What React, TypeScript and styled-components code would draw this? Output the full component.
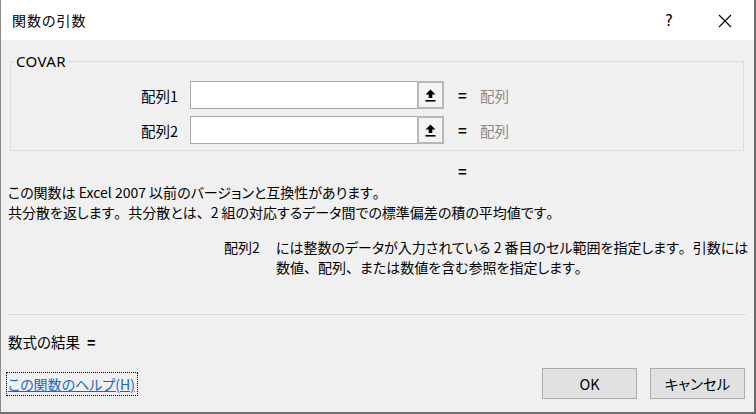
import { FC } from 'react';
import styled, { createGlobalStyle } from 'styled-components';

const GlobalStyle = createGlobalStyle`
  html, body {
    margin: 0;
    padding: 0;
    background: #ffffff;
  }
  body {
    font-family: "Noto Sans CJK JP", "Noto Sans", sans-serif;
    font-feature-settings: "palt";
    color: #000;
  }
`;

const FONT = `"Noto Sans CJK JP", "Noto Sans", sans-serif`;

const ArrowIcon: FC = () => (
  <svg width="11" height="13" viewBox="0 0 11 13">
    <path d="M5.5 0.5 L10.5 5.5 L7.3 5.5 L7.3 9 L3.7 9 L3.7 5.5 L0.5 5.5 Z" fill="#000" />
    <rect x="0.5" y="11" width="10" height="1.6" fill="#000" />
  </svg>
);

const CloseIcon: FC = () => (
  <svg width="14" height="14" viewBox="0 0 14 14">
    <path d="M1 1 L13 13 M13 1 L1 13" stroke="#000" strokeWidth="1.1" fill="none" />
  </svg>
);

type Arg = { label: string };

const args: Arg[] = [{ label: '配列1' }, { label: '配列2' }];

export default function App() {
  return (
    <>
      <GlobalStyle />
      <Window>
        <TitleBar>
          <Title>関数の引数</Title>
          <TitleButtons>
            <HelpMark>?</HelpMark>
            <CloseBox>
              <CloseIcon />
            </CloseBox>
          </TitleButtons>
        </TitleBar>

        <Content>
          <Group>
            <Legend>COVAR</Legend>
            {args.map((a) => (
              <ArgRow key={a.label}>
                <ArgLabel>{a.label}</ArgLabel>
                <Field>
                  <Input />
                  <PickButton>
                    <ArrowIcon />
                  </PickButton>
                </Field>
                <Equals>=</Equals>
                <ArgValue>配列</ArgValue>
              </ArgRow>
            ))}
          </Group>

          <TotalEquals>=</TotalEquals>

          <Paragraph>
            <div>
              この関数は Excel 2007 以前のバージョンと互換性があります<P>。</P>
            </div>
            <div>
              共分散を返します<P>。</P>共分散とは<P>、</P>2 組の対応するデータ間での標準偏差の積の平均値です<P>。</P>
            </div>
          </Paragraph>

          <ArgHelp>
            <ArgHelpLabel>配列2</ArgHelpLabel>
            <ArgHelpText>
              <div>
                には整数のデータが入力されている 2 番目のセル範囲を指定します<P>。</P>引数には
              </div>
              <div>
                数値<P>、</P>配列<P>、</P>または数値を含む参照を指定します<P>。</P>
              </div>
            </ArgHelpText>
          </ArgHelp>

          <Separator />

          <Result>
            数式の結果<ResultEq>=</ResultEq>
          </Result>

          <Footer>
            <HelpLink>この関数のヘルプ(H)</HelpLink>
            <Buttons>
              <DialogButton>OK</DialogButton>
              <DialogButton>キャンセル</DialogButton>
            </Buttons>
          </Footer>
        </Content>
      </Window>
    </>
  );
}

const Window = styled.div`
  width: 756px;
  height: 414px;
  box-sizing: border-box;
  border-left: 1px solid #8c8c8c;
  border-right: 2px solid #6e6e6e;
  border-bottom: 2px solid #6e6e6e;
  background: #f0f0f0;
  display: flex;
  flex-direction: column;
  overflow: hidden;
`;

const TitleBar = styled.div`
  height: 40px;
  background: #ffffff;
  display: flex;
  align-items: center;
  justify-content: space-between;
  padding: 0 0 0 11px;
  flex-shrink: 0;
`;

const Title = styled.div`
  font-family: ${FONT};
  font-size: 14px;
  letter-spacing: 1px;
  color: #000;
`;

const TitleButtons = styled.div`
  display: flex;
  align-items: center;
  height: 100%;
`;

const HelpMark = styled.div`
  width: 46px;
  text-align: center;
  font-family: "DejaVu Sans", sans-serif;
  font-size: 15px;
  margin-right: 10px;
  padding-top: 2px;
`;

const CloseBox = styled.div`
  width: 46px;
  height: 100%;
  display: flex;
  align-items: center;
  justify-content: center;
  margin-right: 6px;
  padding-top: 2px;
`;

const Content = styled.div`
  flex: 1;
  display: flex;
  flex-direction: column;
  padding: 0 8px 0 7px;
`;

const Group = styled.fieldset`
  margin: 13px 2px 0 2px;
  padding: 12px 0 6px 0;
  border: 1px solid #dcdcdc;
  height: 98px;
  box-sizing: border-box;
  display: flex;
  flex-direction: column;
  gap: 7px;
  min-width: 0;
`;

const Legend = styled.legend`
  font-family: "Noto Sans", sans-serif;
  font-size: 15px;
  letter-spacing: 0.4px;
  padding: 0 2px;
  margin-left: 3px;
  line-height: 16px;
  color: #000;
`;

const ArgRow = styled.div`
  display: flex;
  align-items: center;
  height: 28px;
`;

const ArgLabel = styled.div`
  width: 167px;
  text-align: right;
  font-size: 14.5px;
  margin-right: 12px;
`;

const Field = styled.div`
  display: flex;
  height: 28px;
  width: 254px;
`;

const Input = styled.div`
  flex: 1;
  background: #ffffff;
  border: 1px solid #a9a9a9;
  border-right: none;
`;

const PickButton = styled.div`
  width: 27px;
  box-sizing: border-box;
  border: 2px solid #b8b8b8;
  background: #f4f4f4;
  display: flex;
  align-items: center;
  justify-content: center;
`;

const Equals = styled.div`
  font-family: "Liberation Sans", sans-serif;
  font-size: 15px;
  font-weight: bold;
  margin-left: 14px;
  width: 10px;
`;

const ArgValue = styled.div`
  margin-left: 12px;
  font-size: 14.5px;
  color: #8a8a8a;
`;

const TotalEquals = styled.div`
  font-family: "Liberation Sans", sans-serif;
  font-size: 15px;
  font-weight: bold;
  padding-left: 450px;
  margin-top: 11px;
  line-height: 20px;
`;

/* full-width punctuation, as the dialog font keeps it */
const P = styled.span`
  font-feature-settings: normal;
`;

const Paragraph = styled.div`
  font-size: 14px;
  line-height: 20px;
  margin-top: 0;
`;

const ArgHelp = styled.div`
  display: flex;
  margin-top: 15px;
  padding-left: 216px;
  font-size: 14px;
  line-height: 20px;
`;

const ArgHelpLabel = styled.div`
  width: 52px;
  flex-shrink: 0;
`;

const ArgHelpText = styled.div`
  white-space: nowrap;
`;

const Separator = styled.div`
  margin-top: 37px;
  height: 1px;
  background: #dadada;
`;

const Result = styled.div`
  margin-top: 17px;
  font-size: 14.5px;
  line-height: 20px;
`;

const ResultEq = styled.span`
  font-family: "Liberation Sans", sans-serif;
  font-weight: bold;
  margin-left: 7px;
`;

const Footer = styled.div`
  display: flex;
  justify-content: space-between;
  align-items: center;
  margin-top: 15px;
`;

const HelpLink = styled.div`
  font-size: 14px;
  color: #1a67c9;
  text-decoration: underline;
  outline: 1px dotted #000;
  outline-offset: 0;
  padding: 1px 2px 1px 1px;
  margin-left: -1px;
  line-height: 20px;
`;

const Buttons = styled.div`
  display: flex;
  gap: 13px;
  margin-right: 1px;
`;

const DialogButton = styled.button`
  width: 95px;
  height: 31px;
  background: #e1e1e1;
  border: 1px solid #adadad;
  font-family: ${FONT};
  font-feature-settings: "palt";
  font-size: 14.5px;
  color: #000;
  padding: 0;
`;
